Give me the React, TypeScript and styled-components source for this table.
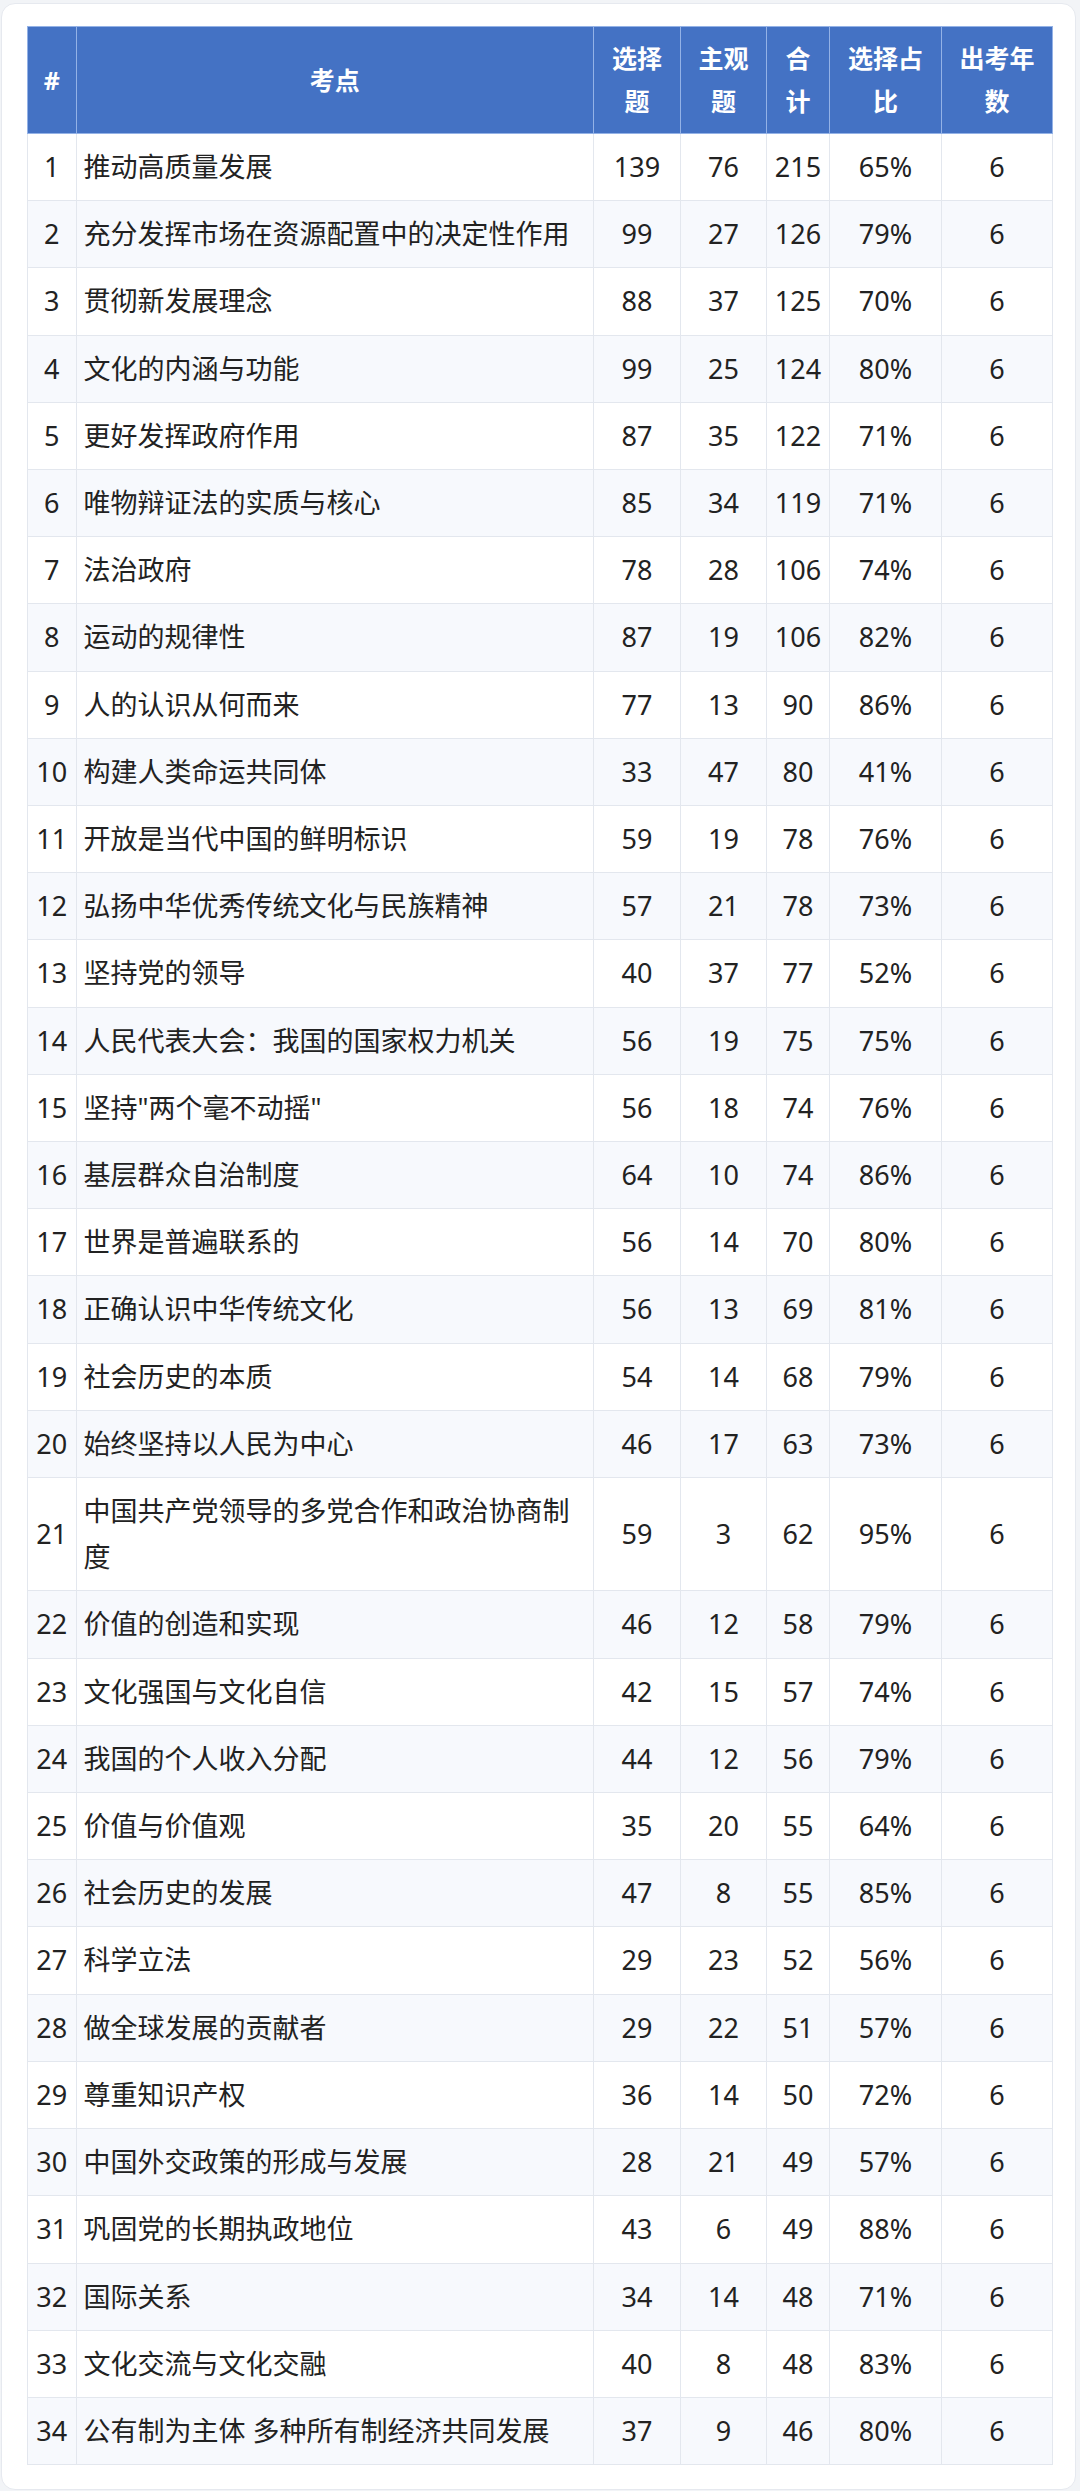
import React from 'react';
import styled, { createGlobalStyle } from 'styled-components';

const GlobalStyle = createGlobalStyle`
  * {
    box-sizing: border-box;
  }
  body {
    margin: 0;
    background-color: #f2f4f7;
    font-family: "Noto Sans", "Noto Sans CJK SC", sans-serif;
  }
`;

const Page = styled.div`
  padding: 3px 4px 3px 1px;
`;

const Card = styled.div`
  background-color: #ffffff;
  border: 1px solid #e6e9ef;
  border-radius: 14px;
  padding: 22px 23px 24px 25px;
`;

const Table = styled.table`
  width: 1025px;
  border-collapse: collapse;
  table-layout: fixed;
  color: #222222;
`;

const HeadCell = styled.th`
  background-color: #4472c4;
  color: #ffffff;
  font-size: 25px;
  font-weight: 700;
  line-height: 43px;
  padding: 10px 7px;
  text-align: center;
  border: 1px solid #94b2e6;
`;

const Row = styled.tr<{ $striped: boolean }>`
  background-color: ${(p) => (p.$striped ? '#f7f9fd' : '#ffffff')};
`;

const Cell = styled.td<{ $left?: boolean }>`
  font-size: 27px;
  line-height: 46.2px;
  padding: 10px 7px;
  text-align: ${(p) => (p.$left ? 'left' : 'center')};
  border: 1px solid #e3e7ee;
  vertical-align: middle;
`;

const headers: { label: string[]; width: number }[] = [
  { label: ['#'], width: 48.5 },
  { label: ['考点'], width: 517.5 },
  { label: ['选择', '题'], width: 87 },
  { label: ['主观', '题'], width: 86 },
  { label: ['合', '计'], width: 63 },
  { label: ['选择占', '比'], width: 112 },
  { label: ['出考年', '数'], width: 111 },
];

const rows: [string, number, number, number, string][] = [
  ['推动高质量发展', 139, 76, 215, '65%'],
  ['充分发挥市场在资源配置中的决定性作用', 99, 27, 126, '79%'],
  ['贯彻新发展理念', 88, 37, 125, '70%'],
  ['文化的内涵与功能', 99, 25, 124, '80%'],
  ['更好发挥政府作用', 87, 35, 122, '71%'],
  ['唯物辩证法的实质与核心', 85, 34, 119, '71%'],
  ['法治政府', 78, 28, 106, '74%'],
  ['运动的规律性', 87, 19, 106, '82%'],
  ['人的认识从何而来', 77, 13, 90, '86%'],
  ['构建人类命运共同体', 33, 47, 80, '41%'],
  ['开放是当代中国的鲜明标识', 59, 19, 78, '76%'],
  ['弘扬中华优秀传统文化与民族精神', 57, 21, 78, '73%'],
  ['坚持党的领导', 40, 37, 77, '52%'],
  ['人民代表大会：我国的国家权力机关', 56, 19, 75, '75%'],
  ['坚持"两个毫不动摇"', 56, 18, 74, '76%'],
  ['基层群众自治制度', 64, 10, 74, '86%'],
  ['世界是普遍联系的', 56, 14, 70, '80%'],
  ['正确认识中华传统文化', 56, 13, 69, '81%'],
  ['社会历史的本质', 54, 14, 68, '79%'],
  ['始终坚持以人民为中心', 46, 17, 63, '73%'],
  ['中国共产党领导的多党合作和政治协商制度', 59, 3, 62, '95%'],
  ['价值的创造和实现', 46, 12, 58, '79%'],
  ['文化强国与文化自信', 42, 15, 57, '74%'],
  ['我国的个人收入分配', 44, 12, 56, '79%'],
  ['价值与价值观', 35, 20, 55, '64%'],
  ['社会历史的发展', 47, 8, 55, '85%'],
  ['科学立法', 29, 23, 52, '56%'],
  ['做全球发展的贡献者', 29, 22, 51, '57%'],
  ['尊重知识产权', 36, 14, 50, '72%'],
  ['中国外交政策的形成与发展', 28, 21, 49, '57%'],
  ['巩固党的长期执政地位', 43, 6, 49, '88%'],
  ['国际关系', 34, 14, 48, '71%'],
  ['文化交流与文化交融', 40, 8, 48, '83%'],
  ['公有制为主体 多种所有制经济共同发展', 37, 9, 46, '80%'],
];

export default function App() {
  return (
    <Page>
      <GlobalStyle />
      <Card>
        <Table>
          <colgroup>
            {headers.map((h, i) => (
              <col key={i} style={{ width: h.width }} />
            ))}
          </colgroup>
          <thead>
            <tr>
              {headers.map((h, i) => (
                <HeadCell key={i}>
                  {h.label.map((line, j) => (
                    <React.Fragment key={j}>
                      {j > 0 && <br />}
                      {line}
                    </React.Fragment>
                  ))}
                </HeadCell>
              ))}
            </tr>
          </thead>
          <tbody>
            {rows.map((r, i) => (
              <Row key={i} $striped={i % 2 === 1}>
                <Cell>{i + 1}</Cell>
                <Cell $left>{r[0]}</Cell>
                <Cell>{r[1]}</Cell>
                <Cell>{r[2]}</Cell>
                <Cell>{r[3]}</Cell>
                <Cell>{r[4]}</Cell>
                <Cell>6</Cell>
              </Row>
            ))}
          </tbody>
        </Table>
      </Card>
    </Page>
  );
}
